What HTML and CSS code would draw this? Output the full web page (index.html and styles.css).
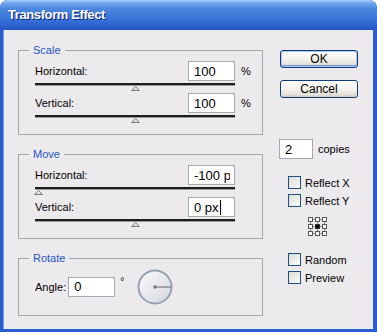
FILE: index.html
```html
<!DOCTYPE html>
<html lang="en">
<head>
    <meta charset="UTF-8">
    <meta name="viewport" content="width=device-width, initial-scale=1.0">
    <title>Transform Effect</title>
    <link rel="stylesheet" href="styles.css">
</head>
<body>
<div class="window">
    <div class="titlebar">Transform Effect</div>
    <div class="content">
        <div class="left">
            <fieldset class="group">
                <legend>Scale</legend>
                <div class="row">
                    <label>Horizontal:</label>
                    <input class="field" type="text" value="100">
                    <span class="unit">%</span>
                </div>
                <div class="slider"><span class="thumb" style="left:50%"><svg width="9" height="5"><polygon points="4.5,0.5 8.5,4.5 0.5,4.5" /></svg></span></div>
                <div class="row">
                    <label>Vertical:</label>
                    <input class="field" type="text" value="100">
                    <span class="unit">%</span>
                </div>
                <div class="slider"><span class="thumb" style="left:50%"><svg width="9" height="5"><polygon points="4.5,0.5 8.5,4.5 0.5,4.5" /></svg></span></div>
            </fieldset>

            <fieldset class="group">
                <legend>Move</legend>
                <div class="row">
                    <label>Horizontal:</label>
                    <input class="field" type="text" value="-100 px">
                    <span class="unit"></span>
                </div>
                <div class="slider"><span class="thumb" style="left:1.5%"><svg width="9" height="5"><polygon points="4.5,0.5 8.5,4.5 0.5,4.5" /></svg></span></div>
                <div class="row">
                    <label>Vertical:</label>
                    <span class="field">0 px<i class="caret"></i></span>
                    <span class="unit"></span>
                </div>
                <div class="slider"><span class="thumb" style="left:50%"><svg width="9" height="5"><polygon points="4.5,0.5 8.5,4.5 0.5,4.5" /></svg></span></div>
            </fieldset>

            <fieldset class="group rotate">
                <legend>Rotate</legend>
                <div class="angle-row">
                    <label>Angle:</label>
                    <input class="field" type="text" value="0">
                    <span class="deg">°</span>
                    <svg class="dial" width="36" height="36" viewBox="0 0 36 36">
                        <defs>
                            <linearGradient id="dialFill" x1="0" y1="0" x2="1" y2="1">
                                <stop offset="0" stop-color="#fbfbfd"/>
                                <stop offset="1" stop-color="#d5d5de"/>
                            </linearGradient>
                        </defs>
                        <circle cx="18" cy="18" r="16.5" fill="url(#dialFill)" stroke="#96a0b4" stroke-width="2"/>
                        <line x1="18" y1="18" x2="34" y2="18" stroke="#666" stroke-width="1"/>
                        <rect x="16.5" y="16.5" width="3" height="3" fill="#777"/>
                    </svg>
                </div>
            </fieldset>
        </div>

        <div class="right">
            <button class="btn default">OK</button>
            <button class="btn">Cancel</button>
            <div class="copies">
                <input class="field small" type="text" value="2">
                <span>copies</span>
            </div>
            <label class="check first"><span class="box"></span>Reflect X</label>
            <label class="check"><span class="box"></span>Reflect Y</label>
            <svg class="refpoint" width="19" height="19" viewBox="0 0 19 19">
                <path d="M2.5 2.5H16.5V16.5H2.5Z M9.5 2.5V16.5 M2.5 9.5H16.5" fill="none" stroke="#8a8a8a" stroke-width="1"/>
                <g fill="#fff" stroke="#555">
                    <rect x="0.5" y="0.5" width="4" height="4"/>
                    <rect x="7.5" y="0.5" width="4" height="4"/>
                    <rect x="14.5" y="0.5" width="4" height="4"/>
                    <rect x="0.5" y="7.5" width="4" height="4"/>
                    <rect x="14.5" y="7.5" width="4" height="4"/>
                    <rect x="0.5" y="14.5" width="4" height="4"/>
                    <rect x="7.5" y="14.5" width="4" height="4"/>
                    <rect x="14.5" y="14.5" width="4" height="4"/>
                </g>
                <rect x="7.5" y="7.5" width="4" height="4" fill="#000" stroke="#333"/>
            </svg>
            <label class="check gap"><span class="box"></span>Random</label>
            <label class="check"><span class="box"></span>Preview</label>
        </div>
    </div>
</div>
</body>
</html>
```

FILE: styles.css
```css
body {
    margin: 0;
    font-family: "Liberation Sans", Arial, sans-serif;
    font-size: 11px;
    color: #000;
    background: #ffffff;
}
.window {
    width: 377px;
    height: 332px;
    display: flex;
    flex-direction: column;
    background: #2a5dce;
    border-radius: 8px 8px 0 0;
    overflow: hidden;
}
.titlebar {
    height: 30px;
    line-height: 30px;
    padding-left: 8px;
    color: #fff;
    font-size: 13px;
    font-weight: bold;
    letter-spacing: -0.4px;
    text-shadow: 1px 1px 0 #0c2376;
    background: linear-gradient(to bottom, #a9cff7 0%, #74a8ec 10%, #4a86de 30%, #3d78da 55%, #2f66d2 80%, #2455c4 100%);
}
.content {
    flex: 1;
    display: flex;
    margin: 0 4px 4px 3px;
    padding: 14px 0 0 15px;
    background: #eceaed;
    box-shadow: inset 1px 0 0 #6f98e6;
}
.left {
    width: 245px;
}
.group {
    margin: 0 0 13px 0;
    padding: 5px 0 9px 16px;
    border: 1px solid #a6a6aa;
    min-width: 0;
}
.group.rotate {
    padding-bottom: 11px;
}
.group legend {
    margin-left: -6px;
    padding: 0 4px;
    line-height: 12px;
    font-size: 11px;
    color: #2458c8;
}
.row {
    display: flex;
    align-items: center;
    width: 222px;
    height: 20px;
}
.row label {
    flex: 1;
}
.field {
    box-sizing: border-box;
    width: 47px;
    height: 20px;
    padding: 0 4px 0 5px;
    border: 1px solid #a2a9b3;
    background: #fff;
    font-family: "Liberation Sans", Arial, sans-serif;
    font-size: 13px;
    color: #000;
    outline: none;
}
span.field {
    display: flex;
    align-items: center;
}
.caret {
    display: inline-block;
    width: 1px;
    height: 15px;
    margin-left: 1px;
    background: #000;
}
.unit {
    width: 16px;
    padding-left: 6px;
}
.slider {
    position: relative;
    width: 200px;
    height: 10px;
    padding-top: 2px;
}
.slider::before {
    content: "";
    display: block;
    height: 2px;
    background: #1c1c1c;
    border-bottom: 1px solid #9c9c9c;
}
.thumb {
    position: absolute;
    top: 5px;
    margin-left: -4.5px;
    line-height: 0;
}
.thumb polygon {
    fill: #e2e2e2;
    stroke: #7c7c7c;
    stroke-width: 1;
}
.angle-row {
    display: flex;
    align-items: center;
    height: 35px;
}
.angle-row label {
    margin-right: 2px;
}
.deg {
    align-self: flex-start;
    margin: 7px 13px 0 5px;
    font-size: 10px;
}
.dial {
    display: block;
}
.right {
    display: flex;
    flex-direction: column;
    align-items: flex-start;
    padding-left: 16px;
}
.btn {
    box-sizing: border-box;
    width: 78px;
    height: 18px;
    margin: 6px 0 0 1px;
    padding: 0;
    border: 1px solid #0f3d7c;
    border-radius: 3px;
    background: linear-gradient(to bottom, #ffffff 0%, #f4f3ee 50%, #e3e1d9 85%, #cdc9bd 100%);
    font-family: "Liberation Sans", Arial, sans-serif;
    font-size: 12px;
    color: #000;
}
.btn.default {
    box-shadow: inset 0 0 0 1px #a9c6f2, inset 0 -1px 0 1px #6d99e3;
}
.btn + .btn {
    margin-top: 12px;
}
.copies {
    display: flex;
    align-items: center;
    margin-top: 41px;
}
.field.small {
    width: 34px;
    margin-right: 5px;
}
.check {
    display: flex;
    align-items: center;
    height: 13px;
    margin: 5px 0 0 9px;
    font-size: 11px;
}
.check.first {
    margin-top: 17px;
}
.check.gap {
    margin-top: 17px;
}
.box {
    box-sizing: border-box;
    width: 13px;
    height: 13px;
    margin-right: 4px;
    border: 1px solid #1c5180;
    background: linear-gradient(135deg, #dcdcd5 0%, #f2f2ef 70%, #ffffff 100%);
}
.refpoint {
    display: block;
    margin: 10px 0 0 29px;
}
```
